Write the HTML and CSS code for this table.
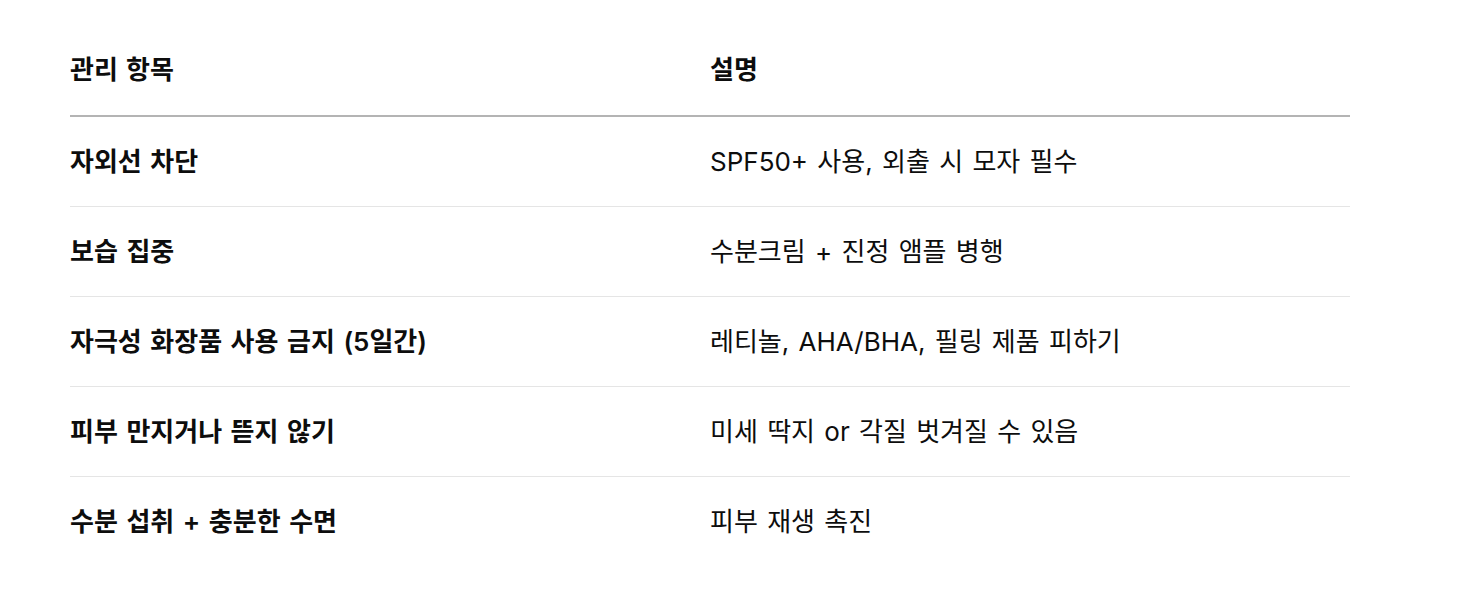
FILE: index.html
```html
<!DOCTYPE html>
<html lang="ko">
<head>
<meta charset="utf-8">
<link rel="stylesheet" href="styles.css">
</head>
<body>
<div class="wrap">
<table class="care">
<thead>
<tr><th>관리 항목</th><th>설명</th></tr>
</thead>
<tbody>
<tr><td class="item">자외선 차단</td><td>SPF50+ 사용, 외출 시 모자 필수</td></tr>
<tr><td class="item">보습 집중</td><td>수분크림 + 진정 앰플 병행</td></tr>
<tr><td class="item">자극성 화장품 사용 금지 (5일간)</td><td>레티놀, AHA/BHA, 필링 제품 피하기</td></tr>
<tr><td class="item">피부 만지거나 뜯지 않기</td><td>미세 딱지 or 각질 벗겨질 수 있음</td></tr>
<tr><td class="item">수분 섭취 + 충분한 수면</td><td>피부 재생 촉진</td></tr>
</tbody>
</table>
</div>
</body>
</html>
```

FILE: styles.css
```css
html, body {
  margin: 0;
  padding: 0;
  background: #ffffff;
}
body {
  font-family: "Inter", "Noto Sans CJK KR", sans-serif;
  color: #0d0d0d;
}
.wrap {
  padding: 25px 116px 0 70px;
}
.care {
  width: 1280px;
  border-collapse: collapse;
  table-layout: fixed;
  font-size: 26px;
  line-height: 37px;
  word-spacing: 2px;
}
.care th {
  text-align: left;
  font-weight: 700;
  padding: 26px 0 27px 0;
  border-bottom: 2px solid #b4b4b4;
}
.care td {
  padding: 26px 0;
  border-bottom: 1px solid #e5e5e5;
  font-weight: 400;
}
.care td.item {
  font-weight: 600;
}
.care tbody tr:last-child td {
  border-bottom: none;
}
```
